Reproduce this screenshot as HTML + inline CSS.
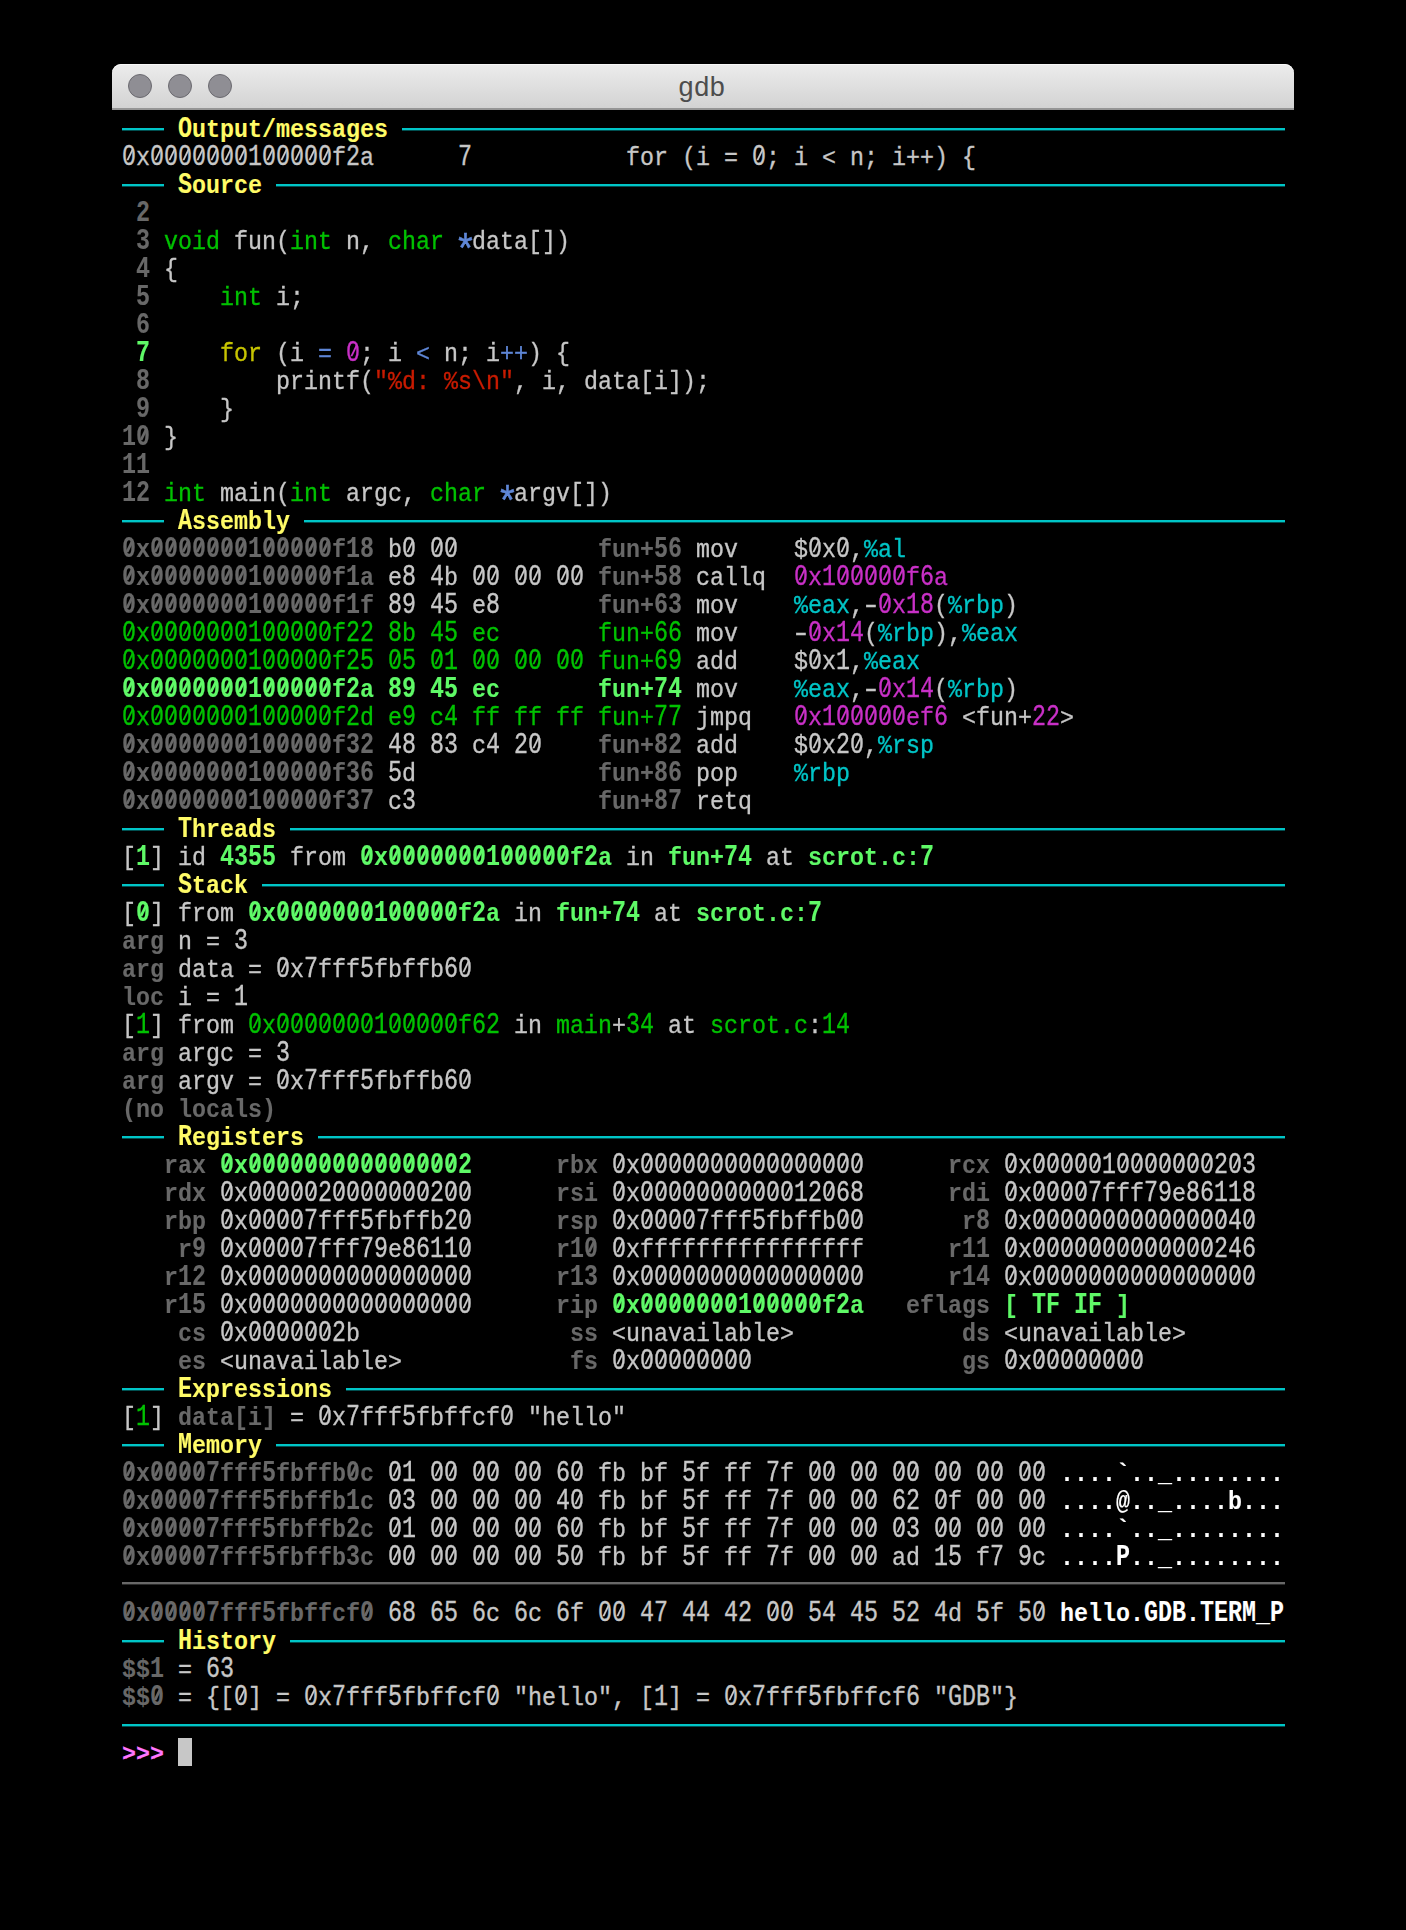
<!DOCTYPE html>
<html><head><meta charset="utf-8"><title>gdb</title>
<style>
html,body{margin:0;padding:0;background:#000;width:1406px;height:1930px;overflow:hidden;}
#win{position:absolute;left:112px;top:64px;width:1182px;height:1866px;background:#000;}
#tb{position:absolute;left:0;top:0;width:1182px;height:44px;border-radius:9px 9px 0 0;background:linear-gradient(#ececec,#d3d3d3);border-bottom:2px solid #959595;box-shadow:inset 0 1px 0 #f8f8f8;}
.dot{position:absolute;top:10px;width:22px;height:22px;border-radius:50%;background:#8f8e94;border:1px solid #6b6a70;}
#title{position:absolute;left:-1px;width:1182px;top:0;height:44px;line-height:44px;text-align:center;font-family:"Liberation Sans",sans-serif;font-size:27px;letter-spacing:0.6px;padding-top:1px;box-sizing:border-box;color:#4d4d4d;}
#term{position:absolute;left:122px;top:114px;width:1164px;height:1700px;font-family:"Liberation Mono",monospace;font-size:23.33px;color:#c7c7c7;}
.ln{position:absolute;left:0;height:28px;line-height:28px;white-space:pre;width:1164px;-webkit-text-stroke:0.3px currentColor;transform:scaleY(1.12);transform-origin:0 -1px;}
.hl{position:absolute;height:2px;background:#00c5c7;box-shadow:0 1px 0 rgba(0,197,199,0.4);}
.hl.gs{background:#686868;box-shadow:0 1px 0 rgba(104,104,104,0.4);}
.y{color:#fffb67;font-weight:bold;}
.g{color:#686868;font-weight:bold;}
.gr{color:#00c200;}
.G{color:#5ff967;font-weight:bold;}
.Y{color:#c7c400;}
.c{color:#00c5c7;}
.m{color:#c930c7;}
.M{color:#ff77ff;font-weight:bold;}
.r{color:#c91b00;}
.b{color:#5f87d7;}
.ast{display:inline-block;transform:translate(0.5px,9.5px) scale(1.6);transform-origin:50% 48%;}
.hy{display:inline-block;transform:scaleX(1.45);}
.z{display:inline-block;position:relative;font-style:normal;}
.z::before{content:"";position:absolute;left:4.8px;top:9.4px;width:4.4px;height:4.8px;background:#000;}
.z::after{content:"";position:absolute;left:6.7px;top:6.5px;width:2px;height:9.4px;background:currentColor;transform:skewX(-31deg);}
.G .z::after,.g .z::after,.w .z::after,.y .z::after,.M .z::after{width:2.6px;left:6.4px;}
.dg{display:inline-block;transform:translateY(0.7px) scaleY(1.1);transform-origin:50% 22px;}
.ang{display:inline-block;transform:translateY(1.5px) scaleY(0.88);}
.w{color:#ffffff;font-weight:bold;}
.g,.G,.y,.w,.M{-webkit-text-stroke-width:0.1px;}
#cur{position:absolute;left:56px;top:1624px;width:14px;height:28px;background:#c7c7c7;}
</style></head><body>
<div id="win"><div id="tb"><div class="dot" style="left:16px"></div><div class="dot" style="left:56px"></div><div class="dot" style="left:96px"></div><div id="title">gdb</div></div></div>
<div id="term">
<i class="hl" style="top:14px;left:0;width:42px"></i><i class="hl" style="top:14px;left:280px;width:883px"></i><div class="ln" style="top:0px">    <span class="y"><span class="dg">O</span>utput/messages</span></div>
<div class="ln" style="top:28px"><span class="dg"><i class="z">0</i></span>x<span class="dg"><i class="z">0</i><i class="z">0</i><i class="z">0</i><i class="z">0</i><i class="z">0</i><i class="z">0</i><i class="z">0</i>1<i class="z">0</i><i class="z">0</i><i class="z">0</i><i class="z">0</i><i class="z">0</i></span>f<span class="dg">2</span>a      <span class="dg">7</span>           for (i = <span class="dg"><i class="z">0</i></span>; i <span class="ang">&lt;</span> n; i++) {</div>
<i class="hl" style="top:70px;left:0;width:42px"></i><i class="hl" style="top:70px;left:154px;width:1009px"></i><div class="ln" style="top:56px">    <span class="y"><span class="dg">S</span>ource</span></div>
<div class="ln" style="top:84px"><span class="g"> <span class="dg">2</span></span></div>
<div class="ln" style="top:112px"><span class="g"> <span class="dg">3</span></span> <span class="gr">void</span> fun(<span class="gr">int</span> n, <span class="gr">char</span> <span class="b ast">*</span>data[])</div>
<div class="ln" style="top:140px"><span class="g"> <span class="dg">4</span></span> {</div>
<div class="ln" style="top:168px"><span class="g"> <span class="dg">5</span></span>     <span class="gr">int</span> i;</div>
<div class="ln" style="top:196px"><span class="g"> <span class="dg">6</span></span></div>
<div class="ln" style="top:224px"><span class="G"> <span class="dg">7</span></span>     <span class="Y">for</span> (i <span class="b">=</span> <span class="m"><span class="dg"><i class="z">0</i></span></span>; i <span class="b"><span class="ang">&lt;</span></span> n; i<span class="b">++</span>) {</div>
<div class="ln" style="top:252px"><span class="g"> <span class="dg">8</span></span>         printf(<span class="r">&quot;%d: %s\n&quot;</span>, i, data[i]);</div>
<div class="ln" style="top:280px"><span class="g"> <span class="dg">9</span></span>     }</div>
<div class="ln" style="top:308px"><span class="g"><span class="dg">1<i class="z">0</i></span></span> }</div>
<div class="ln" style="top:336px"><span class="g"><span class="dg">11</span></span></div>
<div class="ln" style="top:364px"><span class="g"><span class="dg">12</span></span> <span class="gr">int</span> main(<span class="gr">int</span> argc, <span class="gr">char</span> <span class="b ast">*</span>argv[])</div>
<i class="hl" style="top:406px;left:0;width:42px"></i><i class="hl" style="top:406px;left:182px;width:981px"></i><div class="ln" style="top:392px">    <span class="y"><span class="dg">A</span>ssembly</span></div>
<div class="ln" style="top:420px"><span class="g"><span class="dg"><i class="z">0</i></span>x<span class="dg"><i class="z">0</i><i class="z">0</i><i class="z">0</i><i class="z">0</i><i class="z">0</i><i class="z">0</i><i class="z">0</i>1<i class="z">0</i><i class="z">0</i><i class="z">0</i><i class="z">0</i><i class="z">0</i></span>f<span class="dg">18</span></span> b<span class="dg"><i class="z">0</i></span> <span class="dg"><i class="z">0</i><i class="z">0</i></span>          <span class="g">fun+<span class="dg">56</span></span> mov    $<span class="dg"><i class="z">0</i></span>x<span class="dg"><i class="z">0</i></span>,<span class="c">%al</span></div>
<div class="ln" style="top:448px"><span class="g"><span class="dg"><i class="z">0</i></span>x<span class="dg"><i class="z">0</i><i class="z">0</i><i class="z">0</i><i class="z">0</i><i class="z">0</i><i class="z">0</i><i class="z">0</i>1<i class="z">0</i><i class="z">0</i><i class="z">0</i><i class="z">0</i><i class="z">0</i></span>f<span class="dg">1</span>a</span> e<span class="dg">8</span> <span class="dg">4</span>b <span class="dg"><i class="z">0</i><i class="z">0</i></span> <span class="dg"><i class="z">0</i><i class="z">0</i></span> <span class="dg"><i class="z">0</i><i class="z">0</i></span> <span class="g">fun+<span class="dg">58</span></span> callq  <span class="m"><span class="dg"><i class="z">0</i></span>x<span class="dg">1<i class="z">0</i><i class="z">0</i><i class="z">0</i><i class="z">0</i><i class="z">0</i></span>f<span class="dg">6</span>a</span></div>
<div class="ln" style="top:476px"><span class="g"><span class="dg"><i class="z">0</i></span>x<span class="dg"><i class="z">0</i><i class="z">0</i><i class="z">0</i><i class="z">0</i><i class="z">0</i><i class="z">0</i><i class="z">0</i>1<i class="z">0</i><i class="z">0</i><i class="z">0</i><i class="z">0</i><i class="z">0</i></span>f<span class="dg">1</span>f</span> <span class="dg">89</span> <span class="dg">45</span> e<span class="dg">8</span>       <span class="g">fun+<span class="dg">63</span></span> mov    <span class="c">%eax</span>,<span class="hy">-</span><span class="m"><span class="dg"><i class="z">0</i></span>x<span class="dg">18</span></span>(<span class="c">%rbp</span>)</div>
<div class="ln" style="top:504px"><span class="gr"><span class="dg"><i class="z">0</i></span>x<span class="dg"><i class="z">0</i><i class="z">0</i><i class="z">0</i><i class="z">0</i><i class="z">0</i><i class="z">0</i><i class="z">0</i>1<i class="z">0</i><i class="z">0</i><i class="z">0</i><i class="z">0</i><i class="z">0</i></span>f<span class="dg">22</span></span> <span class="gr"><span class="dg">8</span>b <span class="dg">45</span> ec      </span> <span class="gr">fun+<span class="dg">66</span></span> mov    <span class="hy">-</span><span class="m"><span class="dg"><i class="z">0</i></span>x<span class="dg">14</span></span>(<span class="c">%rbp</span>),<span class="c">%eax</span></div>
<div class="ln" style="top:532px"><span class="gr"><span class="dg"><i class="z">0</i></span>x<span class="dg"><i class="z">0</i><i class="z">0</i><i class="z">0</i><i class="z">0</i><i class="z">0</i><i class="z">0</i><i class="z">0</i>1<i class="z">0</i><i class="z">0</i><i class="z">0</i><i class="z">0</i><i class="z">0</i></span>f<span class="dg">25</span></span> <span class="gr"><span class="dg"><i class="z">0</i>5</span> <span class="dg"><i class="z">0</i>1</span> <span class="dg"><i class="z">0</i><i class="z">0</i></span> <span class="dg"><i class="z">0</i><i class="z">0</i></span> <span class="dg"><i class="z">0</i><i class="z">0</i></span></span> <span class="gr">fun+<span class="dg">69</span></span> add    $<span class="dg"><i class="z">0</i></span>x<span class="dg">1</span>,<span class="c">%eax</span></div>
<div class="ln" style="top:560px"><span class="G"><span class="dg"><i class="z">0</i></span>x<span class="dg"><i class="z">0</i><i class="z">0</i><i class="z">0</i><i class="z">0</i><i class="z">0</i><i class="z">0</i><i class="z">0</i>1<i class="z">0</i><i class="z">0</i><i class="z">0</i><i class="z">0</i><i class="z">0</i></span>f<span class="dg">2</span>a</span> <span class="G"><span class="dg">89</span> <span class="dg">45</span> ec      </span> <span class="G">fun+<span class="dg">74</span></span> mov    <span class="c">%eax</span>,<span class="hy">-</span><span class="m"><span class="dg"><i class="z">0</i></span>x<span class="dg">14</span></span>(<span class="c">%rbp</span>)</div>
<div class="ln" style="top:588px"><span class="gr"><span class="dg"><i class="z">0</i></span>x<span class="dg"><i class="z">0</i><i class="z">0</i><i class="z">0</i><i class="z">0</i><i class="z">0</i><i class="z">0</i><i class="z">0</i>1<i class="z">0</i><i class="z">0</i><i class="z">0</i><i class="z">0</i><i class="z">0</i></span>f<span class="dg">2</span>d</span> <span class="gr">e<span class="dg">9</span> c<span class="dg">4</span> ff ff ff</span> <span class="gr">fun+<span class="dg">77</span></span> jmpq   <span class="m"><span class="dg"><i class="z">0</i></span>x<span class="dg">1<i class="z">0</i><i class="z">0</i><i class="z">0</i><i class="z">0</i><i class="z">0</i></span>ef<span class="dg">6</span></span> <span class="ang">&lt;</span>fun+<span class="m"><span class="dg">22</span></span><span class="ang">&gt;</span></div>
<div class="ln" style="top:616px"><span class="g"><span class="dg"><i class="z">0</i></span>x<span class="dg"><i class="z">0</i><i class="z">0</i><i class="z">0</i><i class="z">0</i><i class="z">0</i><i class="z">0</i><i class="z">0</i>1<i class="z">0</i><i class="z">0</i><i class="z">0</i><i class="z">0</i><i class="z">0</i></span>f<span class="dg">32</span></span> <span class="dg">48</span> <span class="dg">83</span> c<span class="dg">4</span> <span class="dg">2<i class="z">0</i></span>    <span class="g">fun+<span class="dg">82</span></span> add    $<span class="dg"><i class="z">0</i></span>x<span class="dg">2<i class="z">0</i></span>,<span class="c">%rsp</span></div>
<div class="ln" style="top:644px"><span class="g"><span class="dg"><i class="z">0</i></span>x<span class="dg"><i class="z">0</i><i class="z">0</i><i class="z">0</i><i class="z">0</i><i class="z">0</i><i class="z">0</i><i class="z">0</i>1<i class="z">0</i><i class="z">0</i><i class="z">0</i><i class="z">0</i><i class="z">0</i></span>f<span class="dg">36</span></span> <span class="dg">5</span>d             <span class="g">fun+<span class="dg">86</span></span> pop    <span class="c">%rbp</span></div>
<div class="ln" style="top:672px"><span class="g"><span class="dg"><i class="z">0</i></span>x<span class="dg"><i class="z">0</i><i class="z">0</i><i class="z">0</i><i class="z">0</i><i class="z">0</i><i class="z">0</i><i class="z">0</i>1<i class="z">0</i><i class="z">0</i><i class="z">0</i><i class="z">0</i><i class="z">0</i></span>f<span class="dg">37</span></span> c<span class="dg">3</span>             <span class="g">fun+<span class="dg">87</span></span> retq   </div>
<i class="hl" style="top:714px;left:0;width:42px"></i><i class="hl" style="top:714px;left:168px;width:995px"></i><div class="ln" style="top:700px">    <span class="y"><span class="dg">T</span>hreads</span></div>
<div class="ln" style="top:728px">[<span class="G"><span class="dg">1</span></span>] id <span class="G"><span class="dg">4355</span></span> from <span class="G"><span class="dg"><i class="z">0</i></span>x<span class="dg"><i class="z">0</i><i class="z">0</i><i class="z">0</i><i class="z">0</i><i class="z">0</i><i class="z">0</i><i class="z">0</i>1<i class="z">0</i><i class="z">0</i><i class="z">0</i><i class="z">0</i><i class="z">0</i></span>f<span class="dg">2</span>a</span> in <span class="G">fun+<span class="dg">74</span></span> at <span class="G">scrot.c:<span class="dg">7</span></span></div>
<i class="hl" style="top:770px;left:0;width:42px"></i><i class="hl" style="top:770px;left:140px;width:1023px"></i><div class="ln" style="top:756px">    <span class="y"><span class="dg">S</span>tack</span></div>
<div class="ln" style="top:784px">[<span class="G"><span class="dg"><i class="z">0</i></span></span>] from <span class="G"><span class="dg"><i class="z">0</i></span>x<span class="dg"><i class="z">0</i><i class="z">0</i><i class="z">0</i><i class="z">0</i><i class="z">0</i><i class="z">0</i><i class="z">0</i>1<i class="z">0</i><i class="z">0</i><i class="z">0</i><i class="z">0</i><i class="z">0</i></span>f<span class="dg">2</span>a</span> in <span class="G">fun+<span class="dg">74</span></span> at <span class="G">scrot.c:<span class="dg">7</span></span></div>
<div class="ln" style="top:812px"><span class="g">arg</span> n = <span class="dg">3</span></div>
<div class="ln" style="top:840px"><span class="g">arg</span> data = <span class="dg"><i class="z">0</i></span>x<span class="dg">7</span>fff<span class="dg">5</span>fbffb<span class="dg">6<i class="z">0</i></span></div>
<div class="ln" style="top:868px"><span class="g">loc</span> i = <span class="dg">1</span></div>
<div class="ln" style="top:896px">[<span class="gr"><span class="dg">1</span></span>] from <span class="gr"><span class="dg"><i class="z">0</i></span>x<span class="dg"><i class="z">0</i><i class="z">0</i><i class="z">0</i><i class="z">0</i><i class="z">0</i><i class="z">0</i><i class="z">0</i>1<i class="z">0</i><i class="z">0</i><i class="z">0</i><i class="z">0</i><i class="z">0</i></span>f<span class="dg">62</span></span> in <span class="gr">main</span>+<span class="gr"><span class="dg">34</span></span> at <span class="gr">scrot.c</span>:<span class="gr"><span class="dg">14</span></span></div>
<div class="ln" style="top:924px"><span class="g">arg</span> argc = <span class="dg">3</span></div>
<div class="ln" style="top:952px"><span class="g">arg</span> argv = <span class="dg"><i class="z">0</i></span>x<span class="dg">7</span>fff<span class="dg">5</span>fbffb<span class="dg">6<i class="z">0</i></span></div>
<div class="ln" style="top:980px"><span class="g">(no locals)</span></div>
<i class="hl" style="top:1022px;left:0;width:42px"></i><i class="hl" style="top:1022px;left:196px;width:967px"></i><div class="ln" style="top:1008px">    <span class="y"><span class="dg">R</span>egisters</span></div>
<div class="ln" style="top:1036px"><span class="g">   rax</span> <span class="G"><span class="dg"><i class="z">0</i></span>x<span class="dg"><i class="z">0</i><i class="z">0</i><i class="z">0</i><i class="z">0</i><i class="z">0</i><i class="z">0</i><i class="z">0</i><i class="z">0</i><i class="z">0</i><i class="z">0</i><i class="z">0</i><i class="z">0</i><i class="z">0</i><i class="z">0</i><i class="z">0</i>2</span></span>   <span class="g">   rbx</span> <span class="dg"><i class="z">0</i></span>x<span class="dg"><i class="z">0</i><i class="z">0</i><i class="z">0</i><i class="z">0</i><i class="z">0</i><i class="z">0</i><i class="z">0</i><i class="z">0</i><i class="z">0</i><i class="z">0</i><i class="z">0</i><i class="z">0</i><i class="z">0</i><i class="z">0</i><i class="z">0</i><i class="z">0</i></span>   <span class="g">   rcx</span> <span class="dg"><i class="z">0</i></span>x<span class="dg"><i class="z">0</i><i class="z">0</i><i class="z">0</i><i class="z">0</i><i class="z">0</i>1<i class="z">0</i><i class="z">0</i><i class="z">0</i><i class="z">0</i><i class="z">0</i><i class="z">0</i><i class="z">0</i>2<i class="z">0</i>3</span></div>
<div class="ln" style="top:1064px"><span class="g">   rdx</span> <span class="dg"><i class="z">0</i></span>x<span class="dg"><i class="z">0</i><i class="z">0</i><i class="z">0</i><i class="z">0</i><i class="z">0</i>2<i class="z">0</i><i class="z">0</i><i class="z">0</i><i class="z">0</i><i class="z">0</i><i class="z">0</i><i class="z">0</i>2<i class="z">0</i><i class="z">0</i></span>   <span class="g">   rsi</span> <span class="dg"><i class="z">0</i></span>x<span class="dg"><i class="z">0</i><i class="z">0</i><i class="z">0</i><i class="z">0</i><i class="z">0</i><i class="z">0</i><i class="z">0</i><i class="z">0</i><i class="z">0</i><i class="z">0</i><i class="z">0</i>12<i class="z">0</i>68</span>   <span class="g">   rdi</span> <span class="dg"><i class="z">0</i></span>x<span class="dg"><i class="z">0</i><i class="z">0</i><i class="z">0</i><i class="z">0</i>7</span>fff<span class="dg">79</span>e<span class="dg">86118</span></div>
<div class="ln" style="top:1092px"><span class="g">   rbp</span> <span class="dg"><i class="z">0</i></span>x<span class="dg"><i class="z">0</i><i class="z">0</i><i class="z">0</i><i class="z">0</i>7</span>fff<span class="dg">5</span>fbffb<span class="dg">2<i class="z">0</i></span>   <span class="g">   rsp</span> <span class="dg"><i class="z">0</i></span>x<span class="dg"><i class="z">0</i><i class="z">0</i><i class="z">0</i><i class="z">0</i>7</span>fff<span class="dg">5</span>fbffb<span class="dg"><i class="z">0</i><i class="z">0</i></span>   <span class="g">    r<span class="dg">8</span></span> <span class="dg"><i class="z">0</i></span>x<span class="dg"><i class="z">0</i><i class="z">0</i><i class="z">0</i><i class="z">0</i><i class="z">0</i><i class="z">0</i><i class="z">0</i><i class="z">0</i><i class="z">0</i><i class="z">0</i><i class="z">0</i><i class="z">0</i><i class="z">0</i><i class="z">0</i>4<i class="z">0</i></span></div>
<div class="ln" style="top:1120px"><span class="g">    r<span class="dg">9</span></span> <span class="dg"><i class="z">0</i></span>x<span class="dg"><i class="z">0</i><i class="z">0</i><i class="z">0</i><i class="z">0</i>7</span>fff<span class="dg">79</span>e<span class="dg">8611<i class="z">0</i></span>   <span class="g">   r<span class="dg">1<i class="z">0</i></span></span> <span class="dg"><i class="z">0</i></span>xffffffffffffffff   <span class="g">   r<span class="dg">11</span></span> <span class="dg"><i class="z">0</i></span>x<span class="dg"><i class="z">0</i><i class="z">0</i><i class="z">0</i><i class="z">0</i><i class="z">0</i><i class="z">0</i><i class="z">0</i><i class="z">0</i><i class="z">0</i><i class="z">0</i><i class="z">0</i><i class="z">0</i><i class="z">0</i>246</span></div>
<div class="ln" style="top:1148px"><span class="g">   r<span class="dg">12</span></span> <span class="dg"><i class="z">0</i></span>x<span class="dg"><i class="z">0</i><i class="z">0</i><i class="z">0</i><i class="z">0</i><i class="z">0</i><i class="z">0</i><i class="z">0</i><i class="z">0</i><i class="z">0</i><i class="z">0</i><i class="z">0</i><i class="z">0</i><i class="z">0</i><i class="z">0</i><i class="z">0</i><i class="z">0</i></span>   <span class="g">   r<span class="dg">13</span></span> <span class="dg"><i class="z">0</i></span>x<span class="dg"><i class="z">0</i><i class="z">0</i><i class="z">0</i><i class="z">0</i><i class="z">0</i><i class="z">0</i><i class="z">0</i><i class="z">0</i><i class="z">0</i><i class="z">0</i><i class="z">0</i><i class="z">0</i><i class="z">0</i><i class="z">0</i><i class="z">0</i><i class="z">0</i></span>   <span class="g">   r<span class="dg">14</span></span> <span class="dg"><i class="z">0</i></span>x<span class="dg"><i class="z">0</i><i class="z">0</i><i class="z">0</i><i class="z">0</i><i class="z">0</i><i class="z">0</i><i class="z">0</i><i class="z">0</i><i class="z">0</i><i class="z">0</i><i class="z">0</i><i class="z">0</i><i class="z">0</i><i class="z">0</i><i class="z">0</i><i class="z">0</i></span></div>
<div class="ln" style="top:1176px"><span class="g">   r<span class="dg">15</span></span> <span class="dg"><i class="z">0</i></span>x<span class="dg"><i class="z">0</i><i class="z">0</i><i class="z">0</i><i class="z">0</i><i class="z">0</i><i class="z">0</i><i class="z">0</i><i class="z">0</i><i class="z">0</i><i class="z">0</i><i class="z">0</i><i class="z">0</i><i class="z">0</i><i class="z">0</i><i class="z">0</i><i class="z">0</i></span>   <span class="g">   rip</span> <span class="G"><span class="dg"><i class="z">0</i></span>x<span class="dg"><i class="z">0</i><i class="z">0</i><i class="z">0</i><i class="z">0</i><i class="z">0</i><i class="z">0</i><i class="z">0</i>1<i class="z">0</i><i class="z">0</i><i class="z">0</i><i class="z">0</i><i class="z">0</i></span>f<span class="dg">2</span>a</span>   <span class="g">eflags</span> <span class="G">[ <span class="dg">TF</span> <span class="dg">IF</span> ]</span></div>
<div class="ln" style="top:1204px"><span class="g">    cs</span> <span class="dg"><i class="z">0</i></span>x<span class="dg"><i class="z">0</i><i class="z">0</i><i class="z">0</i><i class="z">0</i><i class="z">0</i><i class="z">0</i>2</span>b           <span class="g">    ss</span> <span class="ang">&lt;</span>unavailable<span class="ang">&gt;</span>        <span class="g">    ds</span> <span class="ang">&lt;</span>unavailable<span class="ang">&gt;</span></div>
<div class="ln" style="top:1232px"><span class="g">    es</span> <span class="ang">&lt;</span>unavailable<span class="ang">&gt;</span>        <span class="g">    fs</span> <span class="dg"><i class="z">0</i></span>x<span class="dg"><i class="z">0</i><i class="z">0</i><i class="z">0</i><i class="z">0</i><i class="z">0</i><i class="z">0</i><i class="z">0</i><i class="z">0</i></span>           <span class="g">    gs</span> <span class="dg"><i class="z">0</i></span>x<span class="dg"><i class="z">0</i><i class="z">0</i><i class="z">0</i><i class="z">0</i><i class="z">0</i><i class="z">0</i><i class="z">0</i><i class="z">0</i></span></div>
<i class="hl" style="top:1274px;left:0;width:42px"></i><i class="hl" style="top:1274px;left:224px;width:939px"></i><div class="ln" style="top:1260px">    <span class="y"><span class="dg">E</span>xpressions</span></div>
<div class="ln" style="top:1288px">[<span class="gr"><span class="dg">1</span></span>] <span class="g">data[i]</span> = <span class="dg"><i class="z">0</i></span>x<span class="dg">7</span>fff<span class="dg">5</span>fbffcf<span class="dg"><i class="z">0</i></span> &quot;hello&quot;</div>
<i class="hl" style="top:1330px;left:0;width:42px"></i><i class="hl" style="top:1330px;left:154px;width:1009px"></i><div class="ln" style="top:1316px">    <span class="y"><span class="dg">M</span>emory</span></div>
<div class="ln" style="top:1344px"><span class="g"><span class="dg"><i class="z">0</i></span>x<span class="dg"><i class="z">0</i><i class="z">0</i><i class="z">0</i><i class="z">0</i>7</span>fff<span class="dg">5</span>fbffb<span class="dg"><i class="z">0</i></span>c</span> <span class="dg"><i class="z">0</i>1</span> <span class="dg"><i class="z">0</i><i class="z">0</i></span> <span class="dg"><i class="z">0</i><i class="z">0</i></span> <span class="dg"><i class="z">0</i><i class="z">0</i></span> <span class="dg">6<i class="z">0</i></span> fb bf <span class="dg">5</span>f ff <span class="dg">7</span>f <span class="dg"><i class="z">0</i><i class="z">0</i></span> <span class="dg"><i class="z">0</i><i class="z">0</i></span> <span class="dg"><i class="z">0</i><i class="z">0</i></span> <span class="dg"><i class="z">0</i><i class="z">0</i></span> <span class="dg"><i class="z">0</i><i class="z">0</i></span> <span class="dg"><i class="z">0</i><i class="z">0</i></span> <span class="w">....`.._........</span></div>
<div class="ln" style="top:1372px"><span class="g"><span class="dg"><i class="z">0</i></span>x<span class="dg"><i class="z">0</i><i class="z">0</i><i class="z">0</i><i class="z">0</i>7</span>fff<span class="dg">5</span>fbffb<span class="dg">1</span>c</span> <span class="dg"><i class="z">0</i>3</span> <span class="dg"><i class="z">0</i><i class="z">0</i></span> <span class="dg"><i class="z">0</i><i class="z">0</i></span> <span class="dg"><i class="z">0</i><i class="z">0</i></span> <span class="dg">4<i class="z">0</i></span> fb bf <span class="dg">5</span>f ff <span class="dg">7</span>f <span class="dg"><i class="z">0</i><i class="z">0</i></span> <span class="dg"><i class="z">0</i><i class="z">0</i></span> <span class="dg">62</span> <span class="dg"><i class="z">0</i></span>f <span class="dg"><i class="z">0</i><i class="z">0</i></span> <span class="dg"><i class="z">0</i><i class="z">0</i></span> <span class="w">....@.._....b...</span></div>
<div class="ln" style="top:1400px"><span class="g"><span class="dg"><i class="z">0</i></span>x<span class="dg"><i class="z">0</i><i class="z">0</i><i class="z">0</i><i class="z">0</i>7</span>fff<span class="dg">5</span>fbffb<span class="dg">2</span>c</span> <span class="dg"><i class="z">0</i>1</span> <span class="dg"><i class="z">0</i><i class="z">0</i></span> <span class="dg"><i class="z">0</i><i class="z">0</i></span> <span class="dg"><i class="z">0</i><i class="z">0</i></span> <span class="dg">6<i class="z">0</i></span> fb bf <span class="dg">5</span>f ff <span class="dg">7</span>f <span class="dg"><i class="z">0</i><i class="z">0</i></span> <span class="dg"><i class="z">0</i><i class="z">0</i></span> <span class="dg"><i class="z">0</i>3</span> <span class="dg"><i class="z">0</i><i class="z">0</i></span> <span class="dg"><i class="z">0</i><i class="z">0</i></span> <span class="dg"><i class="z">0</i><i class="z">0</i></span> <span class="w">....`.._........</span></div>
<div class="ln" style="top:1428px"><span class="g"><span class="dg"><i class="z">0</i></span>x<span class="dg"><i class="z">0</i><i class="z">0</i><i class="z">0</i><i class="z">0</i>7</span>fff<span class="dg">5</span>fbffb<span class="dg">3</span>c</span> <span class="dg"><i class="z">0</i><i class="z">0</i></span> <span class="dg"><i class="z">0</i><i class="z">0</i></span> <span class="dg"><i class="z">0</i><i class="z">0</i></span> <span class="dg"><i class="z">0</i><i class="z">0</i></span> <span class="dg">5<i class="z">0</i></span> fb bf <span class="dg">5</span>f ff <span class="dg">7</span>f <span class="dg"><i class="z">0</i><i class="z">0</i></span> <span class="dg"><i class="z">0</i><i class="z">0</i></span> ad <span class="dg">15</span> f<span class="dg">7</span> <span class="dg">9</span>c <span class="w">....<span class="dg">P</span>.._........</span></div>
<i class="hl gs" style="top:1468px;left:0;width:1163px"></i>
<div class="ln" style="top:1484px"><span class="g"><span class="dg"><i class="z">0</i></span>x<span class="dg"><i class="z">0</i><i class="z">0</i><i class="z">0</i><i class="z">0</i>7</span>fff<span class="dg">5</span>fbffcf<span class="dg"><i class="z">0</i></span></span> <span class="dg">68</span> <span class="dg">65</span> <span class="dg">6</span>c <span class="dg">6</span>c <span class="dg">6</span>f <span class="dg"><i class="z">0</i><i class="z">0</i></span> <span class="dg">47</span> <span class="dg">44</span> <span class="dg">42</span> <span class="dg"><i class="z">0</i><i class="z">0</i></span> <span class="dg">54</span> <span class="dg">45</span> <span class="dg">52</span> <span class="dg">4</span>d <span class="dg">5</span>f <span class="dg">5<i class="z">0</i></span> <span class="w">hello.<span class="dg">GDB</span>.<span class="dg">TERM</span>_<span class="dg">P</span></span></div>
<i class="hl" style="top:1526px;left:0;width:42px"></i><i class="hl" style="top:1526px;left:168px;width:995px"></i><div class="ln" style="top:1512px">    <span class="y"><span class="dg">H</span>istory</span></div>
<div class="ln" style="top:1540px"><span class="g">$$<span class="dg">1</span></span> = <span class="dg">63</span></div>
<div class="ln" style="top:1568px"><span class="g">$$<span class="dg"><i class="z">0</i></span></span> = {[<span class="dg"><i class="z">0</i></span>] = <span class="dg"><i class="z">0</i></span>x<span class="dg">7</span>fff<span class="dg">5</span>fbffcf<span class="dg"><i class="z">0</i></span> &quot;hello&quot;, [<span class="dg">1</span>] = <span class="dg"><i class="z">0</i></span>x<span class="dg">7</span>fff<span class="dg">5</span>fbffcf<span class="dg">6</span> &quot;<span class="dg">GDB</span>&quot;}</div>
<i class="hl" style="top:1610px;left:0;width:1163px"></i>
<div class="ln" style="top:1624px"><span class="M"><span class="ang">&gt;</span><span class="ang">&gt;</span><span class="ang">&gt;</span></span> </div>
<div id="cur"></div>
</div>
</body></html>
